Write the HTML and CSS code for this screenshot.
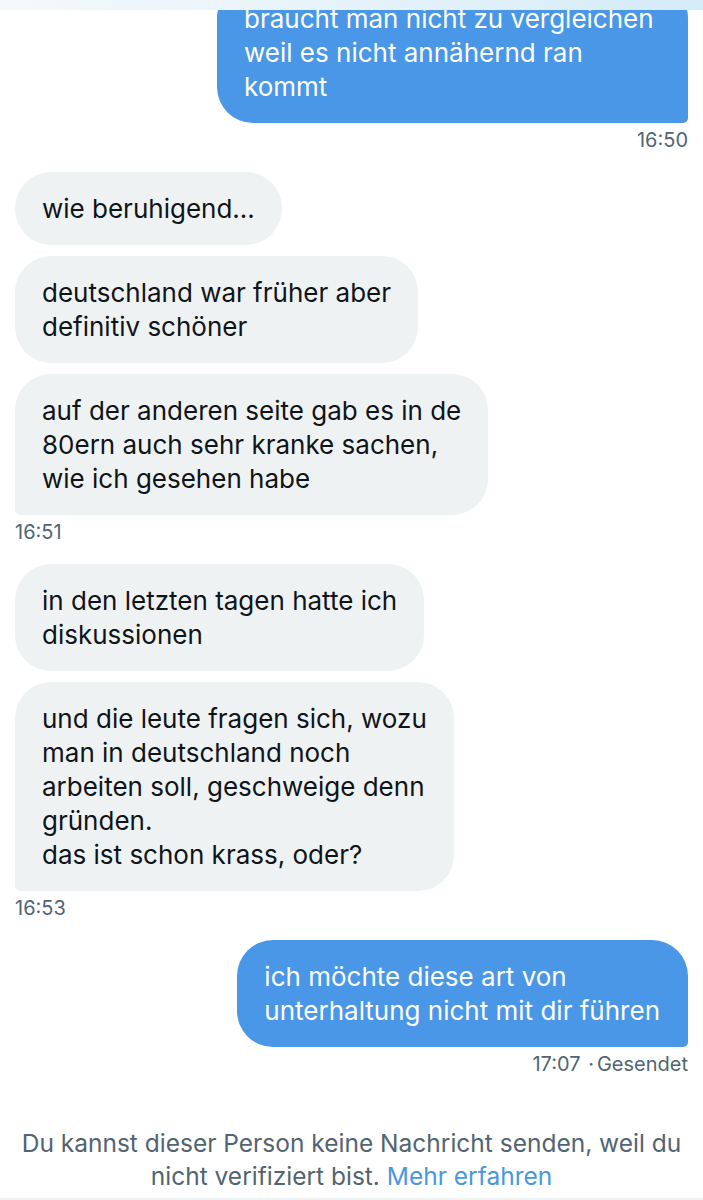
FILE: index.html
```html
<!DOCTYPE html>
<html lang="de">
<head>
    <meta charset="UTF-8">
    <meta name="viewport" content="width=device-width, initial-scale=1.0">
    <title>Nachrichten</title>
    <link rel="stylesheet" href="styles.css">
</head>
<body>
    <header class="topbar"></header>
    <main class="verlauf">
        <div class="nachricht gesendet erste">
            <div class="blase">braucht man nicht zu vergleichen<br>weil es nicht annähernd ran<br>kommt</div>
            <div class="zeit">16:50</div>
        </div>

        <div class="gruppe empfangen">
            <div class="blase">wie beruhigend...</div>
            <div class="blase">deutschland war früher aber<br>definitiv schöner</div>
            <div class="blase letzte">auf der anderen seite gab es in de<br>80ern auch sehr kranke sachen,<br>wie ich gesehen habe</div>
            <div class="zeit">16:51</div>
        </div>

        <div class="gruppe empfangen">
            <div class="blase">in den letzten tagen hatte ich<br>diskussionen</div>
            <div class="blase letzte">und die leute fragen sich, wozu<br>man in deutschland noch<br>arbeiten soll, geschweige denn<br>gründen.<br>das ist schon krass, oder?</div>
            <div class="zeit">16:53</div>
        </div>

        <div class="nachricht gesendet">
            <div class="blase">ich möchte diese art von<br>unterhaltung nicht mit dir führen</div>
            <div class="zeit">17:07 <span class="punkt">·</span>Gesendet</div>
        </div>
    </main>
    <footer class="hinweis">
        <p>Du kannst dieser Person keine Nachricht senden, weil du<br>nicht verifiziert bist. <a href="#">Mehr erfahren</a></p>
    </footer>
</body>
</html>
```

FILE: styles.css
```css
body {
    margin: 0;
    padding: 0;
    background-color: #fff;
    color: #0f1419;
    font-family: 'Inter', 'Roboto', sans-serif;
    width: 703px;
    height: 1200px;
    overflow: hidden;
    display: flex;
    flex-direction: column;
}

.topbar {
    height: 10px;
    flex-shrink: 0;
    background: linear-gradient(90deg, #f4f9fc 0%, #e3f1fa 60%, #d4ebf8 100%);
    position: relative;
    z-index: 2;
}

.verlauf {
    overflow: hidden;
    padding: 0 15px;
    display: flex;
    flex-direction: column;
}

.blase {
    font-size: 26px;
    line-height: 34px;
    padding: 19.5px 27px;
    border-radius: 36px;
    width: fit-content;
    box-sizing: border-box;
}

.nachricht,
.gruppe {
    display: flex;
    flex-direction: column;
    gap: 11px;
}

.gesendet {
    align-items: flex-end;
}

.gesendet .blase {
    background-color: #4a97e7;
    color: #fff;
    border-bottom-right-radius: 5px;
    padding-right: 28px;
}

.erste .blase {
    margin-top: -28px;
    width: 471px;
}

.empfangen .blase {
    background-color: #eff2f3;
}

.empfangen .letzte {
    border-bottom-left-radius: 5px;
}

.zeit {
    font-size: 20px;
    line-height: 24px;
    color: #536471;
    margin-top: -6px;
    margin-bottom: 20px;
}

.punkt {
    margin: 0 3px 0 2px;
}

.hinweis {
    margin-top: auto;
    border-bottom: 2px solid #eff3f4;
    padding: 0 10px 5px;
    text-align: center;
}

.hinweis p {
    margin: 0;
    font-size: 24.5px;
    line-height: 33px;
    color: #536471;
}

.hinweis a {
    color: #4a97e0;
    text-decoration: none;
}
```
